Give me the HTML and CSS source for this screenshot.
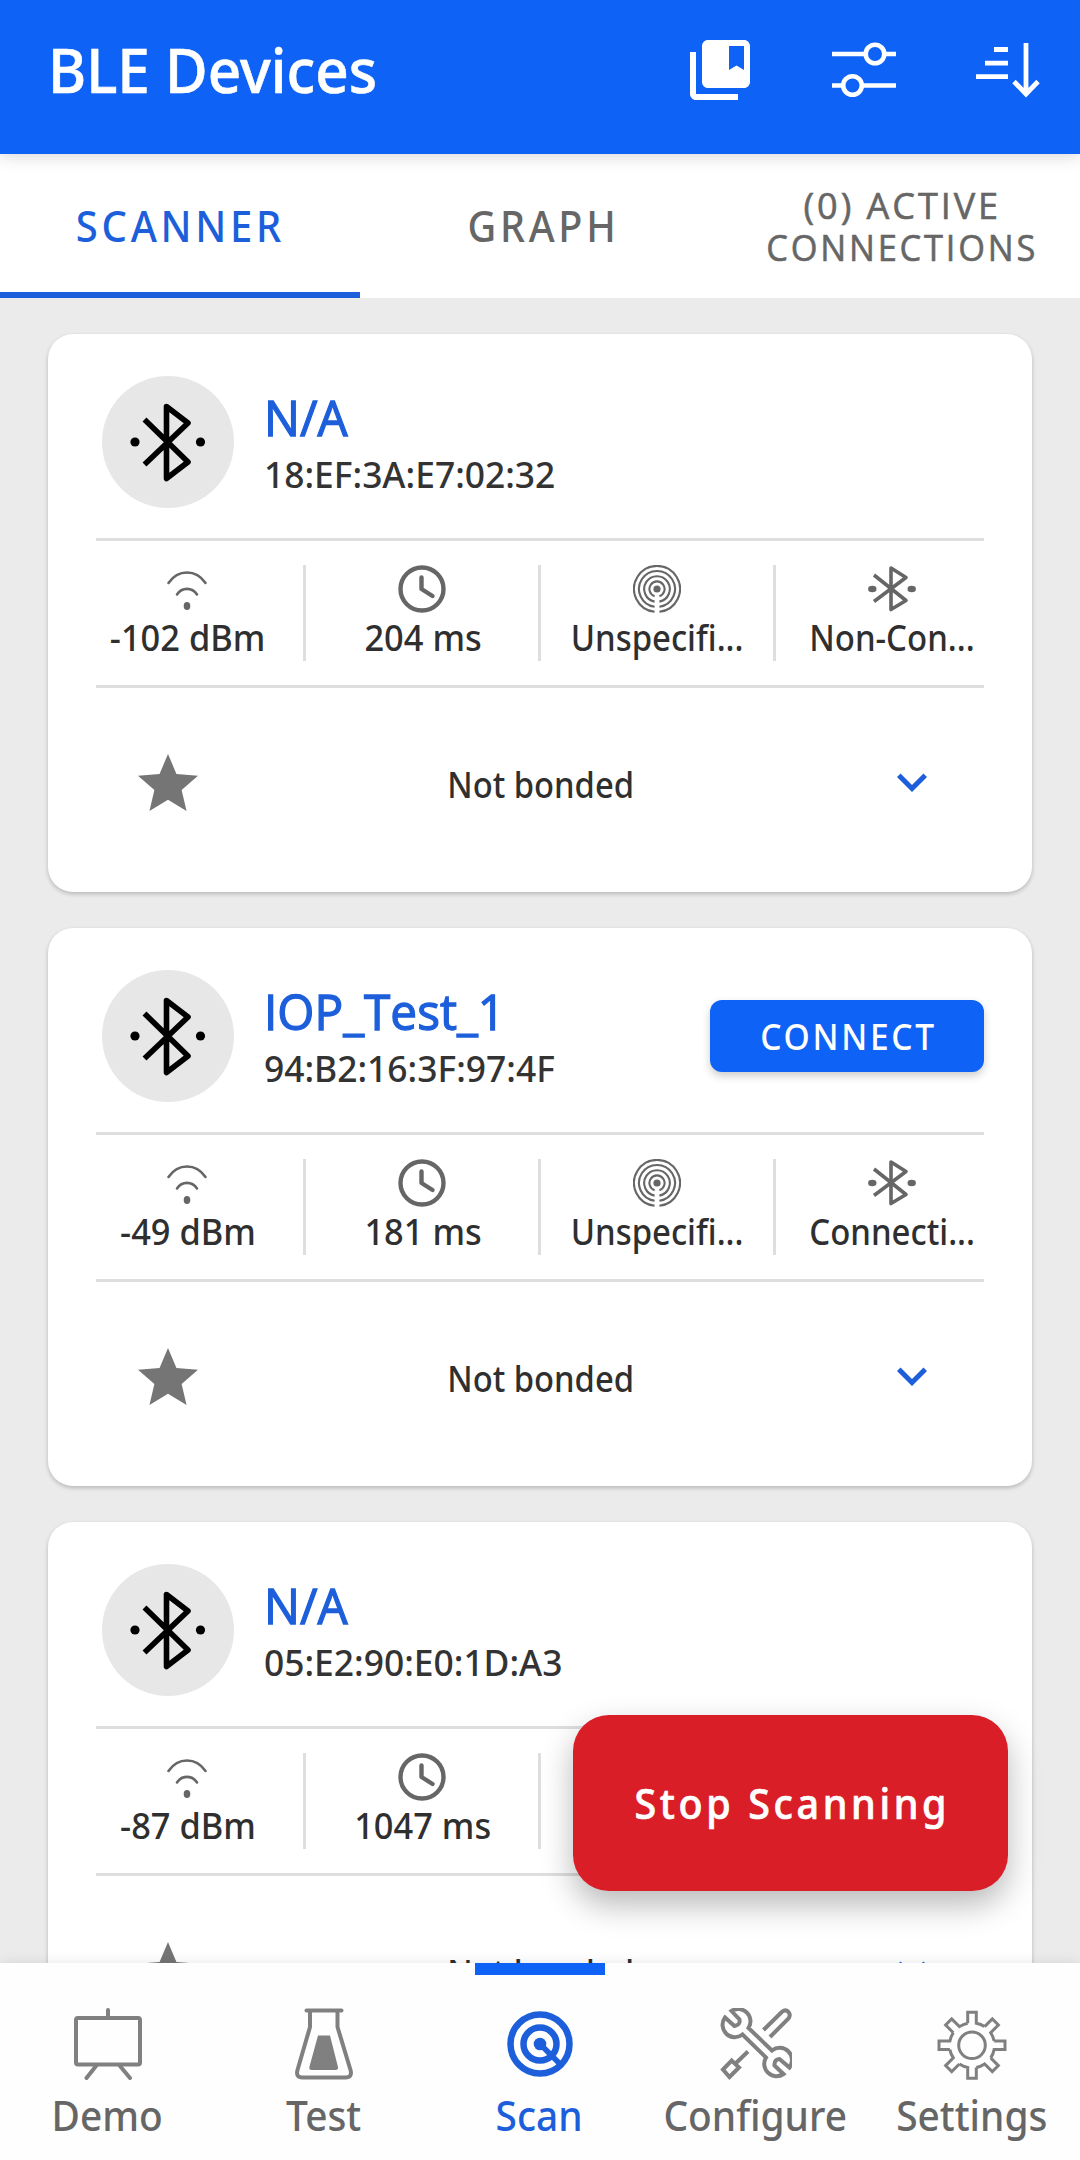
FILE: index.html
```html
<!DOCTYPE html>
<html lang="en">
<head>
<meta charset="utf-8">
<title>BLE Devices</title>
<link rel="stylesheet" href="styles.css">
</head>
<body>
<svg class="sprite" aria-hidden="true">
  <symbol id="i-bt-large" viewBox="0 0 132 132">
    <g fill="none" stroke="#000" stroke-width="5.6" stroke-linejoin="round"><path d="M42.500 43.500 86 86 64.500 102.500V30.500L86 47 42.500 88.500"/></g>
    <circle cx="33" cy="66" r="4.600"/><circle cx="98.500" cy="66" r="4.600"/>
  </symbol>
  <symbol id="i-signal" viewBox="0 0 48 48">
    <g fill="none" stroke="currentColor" stroke-width="2.600" stroke-linecap="round"><path d="M5.500 18C15 4 33 4 42.500 18M14 29.500C19 22 29 22 34 29.500"/></g>
    <ellipse cx="24" cy="41" rx="3.300" ry="4" fill="currentColor"/>
  </symbol>
  <symbol id="i-clock" viewBox="0 0 48 48">
    <g fill="none" stroke="currentColor" stroke-width="4.400" stroke-linecap="round" stroke-linejoin="round"><circle cx="24" cy="24" r="21.500"/><path d="M23.500 12.500V24L34.500 31"/></g>
  </symbol>
  <symbol id="i-beacon" viewBox="0 0 48 48">
    <g fill="none" stroke="currentColor" stroke-width="2.100"><path d="M21.600 46.800A23 23 0 1 1 26.400 46.800M21.600 41.800A18 18 0 1 1 26.400 41.800M21.600 36.600A12.800 12.800 0 1 1 26.400 36.600M21.600 31.200A7.600 7.600 0 1 1 26.400 31.200"/></g>
    <circle cx="24" cy="24" r="3.600" fill="currentColor"/>
  </symbol>
  <symbol id="i-bt" viewBox="0 0 48 48">
    <path d="M6 10 38 35.500 23 44.500V3L38 12.500 6 36.500" fill="none" stroke="currentColor" stroke-width="3.600" stroke-linejoin="round"/>
    <ellipse cx="4.300" cy="24" rx="4.200" ry="3.200" fill="currentColor"/><ellipse cx="43.700" cy="24" rx="4.200" ry="3.200" fill="currentColor"/>
  </symbol>
  <symbol id="i-star" viewBox="0 0 24 24"><path fill="currentColor" d="M12 17.270 18.180 21l-1.640-7.030L22 9.240l-7.190-.61L12 2 9.190 8.630 2 9.240l5.460 4.730L5.820 21z"/></symbol>
  <symbol id="i-chevron" viewBox="0 0 24 24"><path fill="currentColor" d="M16.590 8.590 12 13.170 7.410 8.590 6 10l6 6 6-6z"/></symbol>
</svg>

<div class="app">
  <header class="appbar">
    <h1 class="title"><span class="fit t-title">BLE Devices</span></h1>
    <div class="actions">
      <svg class="icon72" viewBox="0 0 24 24" fill="#fff"><path d="M4 6H2v14c0 1.100.9 2 2 2h14v-2H4V6z"/><path d="M20 2H8c-1.100 0-2 .9-2 2v12c0 1.100.9 2 2 2h12c1.100 0 2-.9 2-2V4c0-1.100-.9-2-2-2zm0 10-2.500-1.500L15 12V4h5v8z"/></svg>
      <svg class="icon72" viewBox="0 0 72 72" fill="none" stroke="#fff" stroke-width="4.600"><path d="M4 20H37M57 20H68M4 51.500H14M34 51.500H68"/><circle cx="47" cy="20" r="9.300"/><circle cx="24.500" cy="51.500" r="9.300"/></svg>
      <svg class="icon72" viewBox="0 0 72 72" fill="none" stroke="#fff" stroke-width="4.800"><path d="M22 15.500H36M13 29.200H36M4 42.700H36M54 9V60M42 47.500 54 60 66 47.500"/></svg>
    </div>
  </header>

  <nav class="tabs">
    <a class="tab tab-active"><span class="fit t-tab">SCANNER</span></a>
    <a class="tab tab-graph"><span class="fit t-tab">GRAPH</span></a>
    <a class="tab tab-two"><span class="fit t-tab2 t-count">(0) ACTIVE</span><span class="fit t-tab2">CONNECTIONS</span></a>
  </nav>

  <main class="list">
    <article class="card">
      <div class="head">
        <span class="avatar"><svg viewBox="0 0 132 132"><use href="#i-bt-large"/></svg></span>
        <div class="ident"><div class="name"><span class="fit t-name">N/A</span></div><div class="addr"><span class="fit t-addr">18:EF:3A:E7:02:32</span></div></div>
      </div>
      <div class="stats">
        <div class="stat"><svg><use href="#i-signal"/></svg><span class="fit t-val">-102 dBm</span></div>
        <div class="stat"><svg><use href="#i-clock"/></svg><span class="fit t-val">204 ms</span></div>
        <div class="stat"><svg><use href="#i-beacon"/></svg><span class="fit t-val t-long">Unspecifi...</span></div>
        <div class="stat"><svg><use href="#i-bt"/></svg><span class="fit t-val t-long">Non-Con...</span></div>
      </div>
      <div class="foot"><svg class="star"><use href="#i-star"/></svg><span class="fit t-bond">Not bonded</span><svg class="chevron"><use href="#i-chevron"/></svg></div>
    </article>

    <article class="card">
      <div class="head">
        <span class="avatar"><svg viewBox="0 0 132 132"><use href="#i-bt-large"/></svg></span>
        <div class="ident"><div class="name"><span class="fit t-name">IOP_Test_1</span></div><div class="addr"><span class="fit t-addr">94:B2:16:3F:97:4F</span></div></div>
        <button class="connect"><span class="fit t-connect">CONNECT</span></button>
      </div>
      <div class="stats">
        <div class="stat"><svg><use href="#i-signal"/></svg><span class="fit t-val">-49 dBm</span></div>
        <div class="stat"><svg><use href="#i-clock"/></svg><span class="fit t-val">181 ms</span></div>
        <div class="stat"><svg><use href="#i-beacon"/></svg><span class="fit t-val t-long">Unspecifi...</span></div>
        <div class="stat"><svg><use href="#i-bt"/></svg><span class="fit t-val t-long">Connecti...</span></div>
      </div>
      <div class="foot"><svg class="star"><use href="#i-star"/></svg><span class="fit t-bond">Not bonded</span><svg class="chevron"><use href="#i-chevron"/></svg></div>
    </article>

    <article class="card">
      <div class="head">
        <span class="avatar"><svg viewBox="0 0 132 132"><use href="#i-bt-large"/></svg></span>
        <div class="ident"><div class="name"><span class="fit t-name">N/A</span></div><div class="addr"><span class="fit t-addr">05:E2:90:E0:1D:A3</span></div></div>
      </div>
      <div class="stats">
        <div class="stat"><svg><use href="#i-signal"/></svg><span class="fit t-val">-87 dBm</span></div>
        <div class="stat"><svg><use href="#i-clock"/></svg><span class="fit t-val">1047 ms</span></div>
        <div class="stat"></div>
        <div class="stat"></div>
      </div>
      <div class="foot"><svg class="star"><use href="#i-star"/></svg><span class="fit t-bond">Not bonded</span><svg class="chevron"><use href="#i-chevron"/></svg></div>
    </article>

    <button class="stop"><span class="fit t-stop">Stop Scanning</span></button>
  </main>

  <nav class="bottom">
    <a class="item">
      <svg class="icon72" viewBox="0 0 72 72" fill="none" stroke="currentColor" stroke-width="4" stroke-linecap="round"><rect x="4" y="10" width="64" height="46.500" rx="2"/><path d="M36 2V9M24 58 14.500 70M48 58 58 70"/></svg>
      <span class="fit t-nav">Demo</span>
    </a>
    <a class="item">
      <svg class="icon72" viewBox="0 0 72 72" fill="none" stroke="currentColor" stroke-width="4"><path d="M18.500 2.400H53.500" stroke-linecap="round"/><path d="M22 3V19L9.500 62Q7.500 69.500 14.500 69.500H57.500Q64.500 69.500 62.500 62L49.500 19V3"/><path d="M30 27.500H42L50 59Q50.500 62 47.500 62H24Q20.500 62 21.500 58.500z" fill="currentColor" stroke="none"/></svg>
      <span class="fit t-nav">Test</span>
    </a>
    <a class="item item-active">
      <svg class="icon72" viewBox="0 0 72 72" fill="none" stroke="currentColor" stroke-width="6.500"><circle cx="36" cy="36" r="29.500"/><circle cx="36" cy="36" r="16.500"/><circle cx="36" cy="36" r="6.300" fill="currentColor" stroke="none"/><path d="M36 36 56 56" stroke-width="5.500"/></svg>
      <span class="fit t-nav">Scan</span>
    </a>
    <a class="item">
      <svg class="icon72" viewBox="0 0 72 72" fill="none" stroke="currentColor" stroke-width="4"><path d="M11.500 3A12.300 12.300 0 0 1 28.500 20L52 42.500A12.300 12.300 0 0 1 69.500 59.500L59.500 51Q54 51.500 54.500 57.500L63.500 66A12.300 12.300 0 0 1 46 49.500L22.500 26.500A12.300 12.300 0 0 1 5 9.500L14.500 18Q20.500 17 19.500 11.500z"/><path d="M43.500 22 62 3.800Q65.500 1 68.500 4 71 7 68.500 10.500L50 29M28 43.500 15 56M3 61.500 11.700 52.500 19 59.500 9.500 69z"/></svg>
      <span class="fit t-nav">Configure</span>
    </a>
    <a class="item">
      <svg class="icon72" viewBox="-36 -37.300 72 72" fill="none" stroke="currentColor" stroke-width="3">
        <g id="tooth"><path d="M-4.300-22.100V-33H4.300V-22.100A22.500 22.500 0 0 1 12.600-18.700"/></g>
        <use href="#tooth" transform="rotate(45)"/><use href="#tooth" transform="rotate(90)"/><use href="#tooth" transform="rotate(135)"/><use href="#tooth" transform="rotate(180)"/><use href="#tooth" transform="rotate(225)"/><use href="#tooth" transform="rotate(270)"/><use href="#tooth" transform="rotate(315)"/>
        <circle r="13.300"/>
      </svg>
      <span class="fit t-nav">Settings</span>
    </a>
  </nav>
</div>
</body>
</html>
```
FILE: styles.css
```css
* { box-sizing: border-box; margin: 0; padding: 0; }
body { font-family: "Noto Sans", "Open Sans", sans-serif; font-weight: 500; background: #ebebeb; color: #2f2f2f; }
button { font: inherit; border: 0; }
.sprite { display: none; }
.app { width: 1080px; height: 2160px; display: flex; flex-direction: column; overflow: hidden; }
.icon72 { width: 72px; height: 72px; flex: none; }
.fit { display: inline-block; white-space: nowrap; }

.appbar { position: relative; z-index: 2; flex: none; height: 154px; padding: 0 36px 14px 48px; display: flex; align-items: center; justify-content: space-between; background: #0f62f6; box-shadow: 0 2px 16px rgba(0, 0, 0, .16); }
.title { font-weight: 500; line-height: 80px; color: #fff; }
.t-title { padding-top: 10px; font-size: 61.5px; -webkit-text-stroke: .6px; transform: scaleX(.949); transform-origin: left; }
.actions { display: flex; gap: 72px; }

.tabs { flex: none; height: 144px; display: grid; grid-template-columns: repeat(3, 360px); background: #fff; }
.tab { display: flex; flex-direction: column; align-items: center; justify-content: center; color: #666; }
.tab-active { padding-left: 1px; color: #1d5fdb; box-shadow: inset 0 -6px #1d5fdb; }
.tab-graph { padding-left: 7px; }
.t-tab { font-size: 43px; line-height: 60px; letter-spacing: 4px; transform: scaleX(.93); }
.tab-graph .t-tab { transform: scaleX(.92); }
.t-tab2 { font-family: "Open Sans", sans-serif; font-size: 37px; line-height: 42px; letter-spacing: 3px; font-weight: 400; -webkit-text-stroke: .6px; transform: scaleX(.93); }
.t-count { transform: scaleX(.975); }
.tab-two { padding-left: 5px; }

.list { position: relative; flex: 1; min-height: 0; overflow: hidden; padding: 36px 48px; display: flex; flex-direction: column; gap: 36px; }
.card { flex: none; height: 558px; background: #fff; border-radius: 25px; box-shadow: 0 2px 4px rgba(0, 0, 0, .22); }
.head { height: 207px; padding: 42px 48px 0 54px; display: flex; align-items: flex-start; }
.avatar { width: 132px; height: 132px; border-radius: 50%; background: #e7e7e7; flex: none; }
.avatar svg { display: block; width: 132px; height: 132px; }
.ident { flex: 1; padding: 11px 0 0 30px; }
.name { line-height: 60px; color: #1d5fdb; height: 60px; }
.t-name { font-family: "Open Sans", sans-serif; font-weight: 400; -webkit-text-stroke: 1.300px; font-size: 49px; transform: scaleX(.974); transform-origin: left; }
.addr { line-height: 56px; height: 56px; color: #333; }
.t-addr { font-size: 36px; transform: scaleX(.983); transform-origin: left; }
.connect { width: 274px; height: 72px; margin-top: 30px; padding-left: 4px; border-radius: 12px; background: #0f62f6; color: #fff; box-shadow: 0 4px 8px rgba(0, 0, 0, .2); }
.t-connect { font-size: 37px; line-height: 72px; letter-spacing: 3px; transform: scaleX(.905); }

.stats { height: 150px; margin: -3px 48px 0; padding-top: 24px; border: solid #dedede; border-width: 3px 0; display: flex; }
.stat { flex: none; width: 235px; height: 96px; border-right: 3px solid #dedede; display: flex; flex-direction: column; align-items: center; color: #666; }
.stat:first-child { margin-left: -25px; }
.stat:last-child { border: 0; width: 232px; margin-right: -25px; }
.stat svg { width: 48px; height: 48px; flex: none; }
.t-val { margin-left: 2px; font-size: 37px; line-height: 48px; color: #2f2f2f; transform: scaleX(.93); }
.t-long { margin-left: 0; transform: scaleX(.89); }

.foot { height: 192px; display: grid; grid-template-columns: 240px 1fr 240px; align-items: center; justify-items: center; }
.star { width: 72px; height: 72px; color: #757575; }
.chevron { width: 60px; height: 60px; margin-bottom: 4px; color: #1d5fdb; }
.t-bond { margin-left: 1px; padding-top: 2px; font-size: 36px; line-height: 50px; transform: scaleX(.91); }

.stop { position: absolute; right: 72px; bottom: 72px; width: 435px; height: 176px; padding-left: 4px; border-radius: 36px; background: #d91e28; color: #fff; box-shadow: 0 14px 32px rgba(0, 0, 0, .28); }
.t-stop { font-size: 42px; line-height: 60px; letter-spacing: 3.900px; -webkit-text-stroke: .7px; transform: scaleX(.938); }

.bottom { position: relative; z-index: 2; flex: none; height: 197px; display: grid; grid-template-columns: repeat(5, 216px); background: #fefefe; box-shadow: 0 0 12px rgba(0, 0, 0, .1); }
.item { position: relative; padding-top: 45px; display: flex; flex-direction: column; align-items: center; color: #808080; }
.t-nav { margin: 7px 1px 0 0; font-size: 42px; line-height: 56px; color: #666; transform: scaleX(.925); }
.item-active, .item-active .t-nav { color: #1d5fdb; }
.item-active::before { content: ""; position: absolute; top: 0; left: 43px; width: 130px; height: 12px; background: #0f62f6; }
```
